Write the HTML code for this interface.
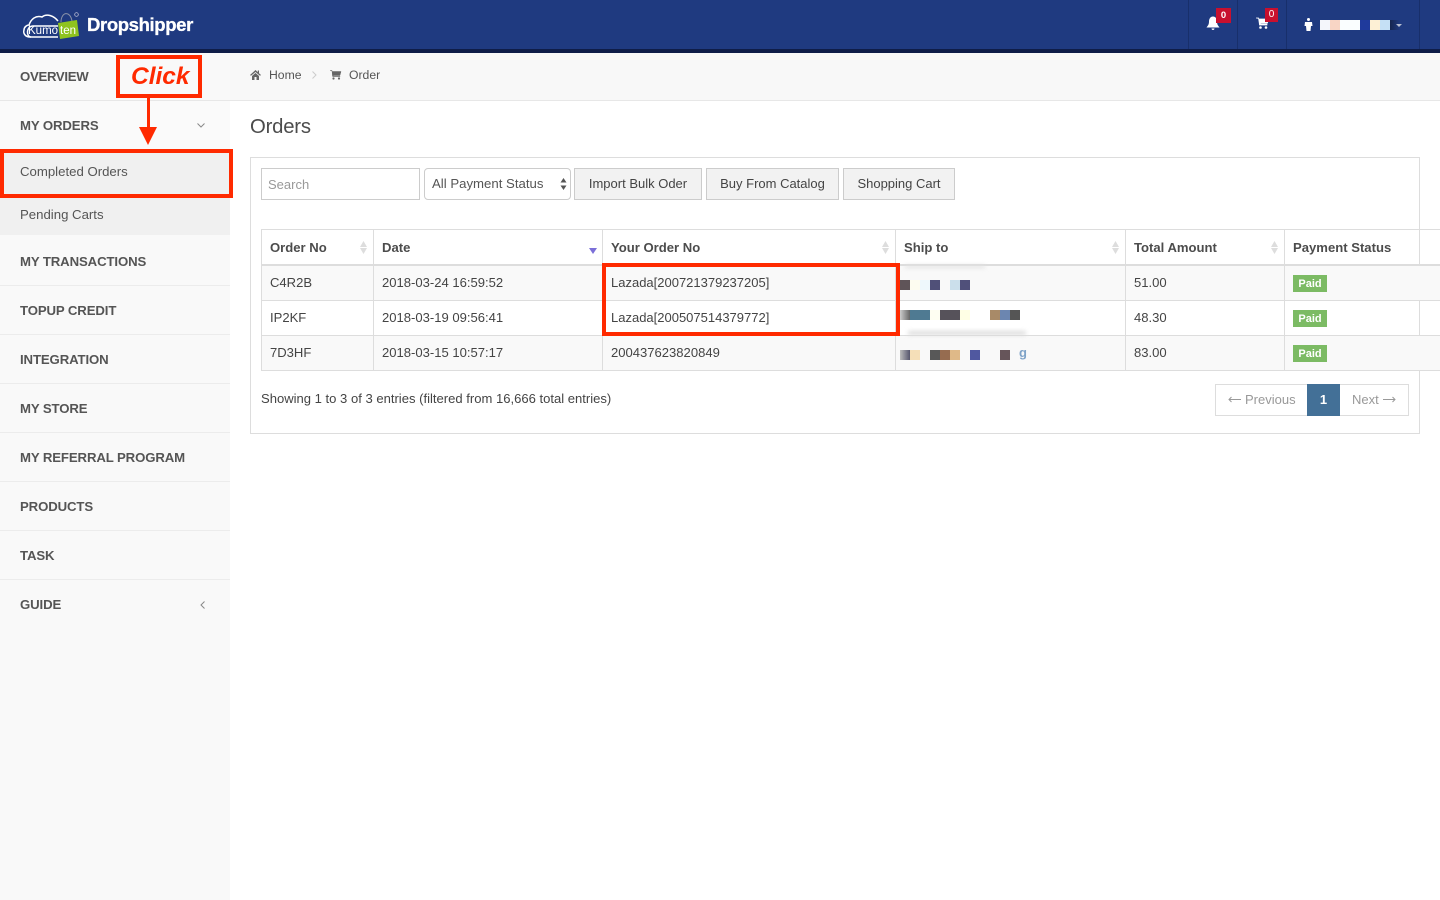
<!DOCTYPE html>
<html><head><meta charset="utf-8"><style>
html,body{margin:0;padding:0;width:1440px;height:900px;overflow:hidden;background:#fff}
body{position:relative;font-family:"Liberation Sans",sans-serif;font-size:13px;color:#444}
.a,.t{position:absolute}
.t{white-space:nowrap;line-height:20px;height:20px}
.m{margin-top:1px}
.s{font-weight:bold;font-size:13.2px;color:#555;letter-spacing:-.12px;margin-top:1px}
.h{font-weight:bold;font-size:13.1px;color:#4c4c4c;margin-top:1px}
.d{color:#444;font-size:13.05px;margin-top:1px}
.l{position:absolute;background:#ddd}
.p{position:absolute;height:10px}
.b{position:absolute;left:1293px;width:34px;height:17px;background:#7cbb64;color:#fff;font-size:11px;font-weight:bold;line-height:18px;text-align:center}
.btn{position:absolute;top:168px;height:32px;box-sizing:border-box;background:#f2f2f2;border:1px solid #ccc;line-height:29px;text-align:center;color:#444;font-size:13px}
.sv{position:absolute;overflow:visible}
</style></head><body>
<div class="a" style="left:0;top:0;width:1440px;height:49px;background:#1f3a80"></div>
<div class="a" style="left:0;top:49px;width:1440px;height:4px;background:#0f1d48"></div>
<svg class="sv" style="left:20px;top:10px" width="62" height="32" viewBox="0 0 62 32">
<path d="M38 27H10C5 27 3 23 4 20C4 17 7 15 9 15C11 9 16 5 22 7C27 3 34 6 38 11" fill="none" stroke="#fff" stroke-width="1.500"/>
<path d="M38 16H13C6 16 6 27 11 27" fill="none" stroke="#fff" stroke-width="1.500"/>
<path d="M38 13L57 10L59 26L40 29Z" fill="#8fc31f"/>
<path d="M41 12C41 2 50 0 52 11" fill="none" stroke="#8a93a8" stroke-width="1"/>
<text x="8" y="24" font-family="Liberation Sans" font-size="11.5" fill="#fff">Kumo</text>
<text x="40" y="24" font-family="Liberation Sans" font-size="11.5" fill="#fff">ten</text>
<circle cx="56.500" cy="4.500" r="1.800" fill="none" stroke="#ccd" stroke-width=".7"/>
</svg>
<div class="t" style="left:87px;top:15px;font-size:18.5px;font-weight:bold;color:#fff;letter-spacing:-.37px;-webkit-text-stroke:.3px #fff">Dropshipper</div>
<div class="a" style="left:1188px;top:0;width:1px;height:49px;background:#182f6b"></div>
<div class="a" style="left:1237px;top:0;width:1px;height:49px;background:#182f6b"></div>
<div class="a" style="left:1286px;top:0;width:1px;height:49px;background:#182f6b"></div>
<div class="a" style="left:1419px;top:0;width:1px;height:49px;background:#182f6b"></div>
<svg class="sv" style="left:1206px;top:16px" width="14" height="15" viewBox="0 0 14 14"><path d="M7 0C4 0 3 3 3 5C3 8 2 9 .5 11H13.500C12 9 11 8 11 5C11 3 10 0 7 0ZM5.500 12H8.500C8.500 14 5.500 14 5.500 12Z" fill="#fff"/></svg>
<div class="a" style="left:1216px;top:8px;width:15px;height:15px;background:#c8102e;color:#fff;font-size:9.5px;font-weight:bold;line-height:15px;text-align:center">0</div>
<svg class="sv" style="left:1256px;top:17px" width="13" height="13" viewBox="0 0 13 13"><path d="M0 1H2.500L3.500 8H11V7H4.500L4.300 6H11.500L12.500 2H3" fill="#fff" stroke="#fff" stroke-width=".7"/><circle cx="4.500" cy="10.500" r="1.300" fill="#fff"/><circle cx="10" cy="10.500" r="1.300" fill="#fff"/></svg>
<div class="a" style="left:1265px;top:8px;width:13px;height:14px;background:#c8102e;color:#fff;font-size:10px;line-height:14px;text-align:center">0</div>
<svg class="sv" style="left:1304px;top:18px" width="9" height="13" viewBox="0 0 9 13"><circle cx="4.500" cy="1.500" r="1.500" fill="#fff"/><path d="M1 4H8L8.500 8H7L6.500 13H2.500L2 8H.5Z" fill="#fff"/></svg>
<div class="a" style="left:1320px;top:20px;width:10px;height:10px;background:#f4f6fb"></div>
<div class="a" style="left:1330px;top:20px;width:10px;height:10px;background:#f8d5c5"></div>
<div class="a" style="left:1340px;top:20px;width:20px;height:10px;background:#fafeff"></div>
<div class="a" style="left:1360px;top:20px;width:10px;height:10px;background:#1f3a9c"></div>
<div class="a" style="left:1370px;top:20px;width:10px;height:10px;background:#fdf0d5"></div>
<div class="a" style="left:1380px;top:20px;width:10px;height:10px;background:#c5e0f5"></div>
<div class="a" style="left:1390px;top:20px;width:10px;height:10px;background:linear-gradient(90deg,#16264f,#1f3a80)"></div>
<div class="a" style="left:1396px;top:24px;width:0;height:0;border:3px solid transparent;border-top:3px solid #b8bfd0"></div>

<div class="a" style="left:0;top:53px;width:230px;height:847px;background:#f9f9f9"></div>
<div class="a" style="left:230px;top:53px;width:1210px;height:47px;background:#f8f8f8"></div>
<div class="l" style="left:0;top:100px;width:1440px;height:1px;background:#e7e7e7"></div>
<div class="a" style="left:0;top:101px;width:230px;height:134px;background:#fafafa"></div>
<div class="a" style="left:0;top:149px;width:230px;height:86px;background:#f0f0f0"></div>

<div class="t s" style="left:20px;top:66px;letter-spacing:-.3px">OVERVIEW</div>
<div class="t s" style="left:20px;top:115px">MY ORDERS</div>
<svg class="sv" style="left:197px;top:123px" width="8" height="5" viewBox="0 0 8 5"><path d="M.5 .5L4 4L7.500 .5" fill="none" stroke="#888" stroke-width="1"/></svg>
<div class="t m" style="left:20px;top:161px;font-size:13.2px;color:#555">Completed Orders</div>
<div class="t m" style="left:20px;top:204px;font-size:13.2px;color:#555">Pending Carts</div>
<div class="t s" style="left:20px;top:251px">MY TRANSACTIONS</div>
<div class="t s" style="left:20px;top:300px">TOPUP CREDIT</div>
<div class="t s" style="left:20px;top:349px">INTEGRATION</div>
<div class="t s" style="left:20px;top:398px">MY STORE</div>
<div class="t s" style="left:20px;top:447px">MY REFERRAL PROGRAM</div>
<div class="t s" style="left:20px;top:496px">PRODUCTS</div>
<div class="t s" style="left:20px;top:545px">TASK</div>
<div class="t s" style="left:20px;top:594px">GUIDE</div>
<svg class="sv" style="left:200px;top:601px" width="5" height="8" viewBox="0 0 5 8"><path d="M4.500 .5L1 4L4.500 7.500" fill="none" stroke="#888" stroke-width="1"/></svg>
<div class="l" style="left:0;top:285px;width:230px;height:1px;background:#ececec"></div>
<div class="l" style="left:0;top:334px;width:230px;height:1px;background:#ececec"></div>
<div class="l" style="left:0;top:383px;width:230px;height:1px;background:#ececec"></div>
<div class="l" style="left:0;top:432px;width:230px;height:1px;background:#ececec"></div>
<div class="l" style="left:0;top:481px;width:230px;height:1px;background:#ececec"></div>
<div class="l" style="left:0;top:530px;width:230px;height:1px;background:#ececec"></div>
<div class="l" style="left:0;top:579px;width:230px;height:1px;background:#ececec"></div>

<svg class="sv" style="left:250px;top:70px" width="11" height="10" viewBox="0 0 11 10"><path d="M5.500 0L0 5L1 5.800L5.500 2L10 5.800L11 5L9 3.200V.5H7.800V2.100ZM2 6V10H4.500V7H6.500V10H9V6L5.500 3Z" fill="#666"/></svg>
<div class="t" style="left:269px;top:65px;font-size:12.2px;color:#555">Home</div>
<svg class="sv" style="left:312px;top:71px" width="5" height="8" viewBox="0 0 5 8"><path d="M.5 .5L4 4L.5 7.500" fill="none" stroke="#ccc" stroke-width="1"/></svg>
<svg class="sv" style="left:330px;top:70px" width="11" height="10" viewBox="0 0 11 10"><path d="M0 .5H2L2.600 6.500H10V5.700H3.400L3.300 5H10L11 1.500H2.500" fill="#666" stroke="#666" stroke-width=".5"/><circle cx="3.500" cy="8.500" r="1.100" fill="#666"/><circle cx="9" cy="8.500" r="1.100" fill="#666"/></svg>
<div class="t" style="left:349px;top:65px;font-size:12.2px;color:#555">Order</div>

<div class="t" style="left:250px;top:117px;font-size:20.3px;color:#4c4c4c;letter-spacing:-.2px">Orders</div>

<div class="a" style="left:250px;top:157px;width:1170px;height:277px;box-sizing:border-box;border:1px solid #ddd"></div>

<div class="a" style="left:261px;top:168px;width:159px;height:32px;box-sizing:border-box;border:1px solid #ccc"></div>
<div class="t m" style="left:268px;top:174px;color:#999">Search</div>
<div class="a" style="left:424px;top:168px;width:147px;height:32px;box-sizing:border-box;border:1px solid #ccc;border-radius:4px"></div>
<div class="t m" style="left:432px;top:173px;color:#555;font-size:13.2px">All Payment Status</div>
<svg class="sv" style="left:560px;top:178px" width="7" height="12" viewBox="0 0 7 12"><path d="M3.500 0L6.500 4.500H.5ZM3.500 12L.5 7.500H6.500Z" fill="#555"/></svg>
<div class="btn" style="left:574px;width:128px;top:168px">Import Bulk Oder</div>
<div class="btn" style="left:706px;width:133px">Buy From Catalog</div>
<div class="btn" style="left:843px;width:112px">Shopping Cart</div>

<div class="a" style="left:261px;top:265px;width:1179px;height:35px;background:#f9f9f9"></div>
<div class="a" style="left:261px;top:335px;width:1179px;height:35px;background:#f9f9f9"></div>
<div class="l" style="left:261px;top:229px;width:1179px;height:1px"></div>
<div class="l" style="left:261px;top:264px;width:1179px;height:2px"></div>
<div class="l" style="left:261px;top:300px;width:1179px;height:1px"></div>
<div class="l" style="left:261px;top:335px;width:1179px;height:1px"></div>
<div class="l" style="left:261px;top:370px;width:1179px;height:1px"></div>
<div class="l" style="left:261px;top:229px;width:1px;height:142px"></div>
<div class="l" style="left:373px;top:229px;width:1px;height:142px"></div>
<div class="l" style="left:602px;top:229px;width:1px;height:142px"></div>
<div class="l" style="left:895px;top:229px;width:1px;height:142px"></div>
<div class="l" style="left:1125px;top:229px;width:1px;height:142px"></div>
<div class="l" style="left:1284px;top:229px;width:1px;height:142px"></div>

<div class="t h" style="left:270px;top:237px">Order No</div>
<div class="t h" style="left:382px;top:237px">Date</div>
<div class="t h" style="left:611px;top:237px">Your Order No</div>
<div class="t h" style="left:904px;top:237px">Ship to</div>
<div class="t h" style="left:1134px;top:237px">Total Amount</div>
<div class="t h" style="left:1293px;top:237px">Payment Status</div>
<svg class="sv" style="left:360px;top:241px" width="7" height="13" viewBox="0 0 7 13"><path d="M3.500 0L7 6H0ZM3.500 13L0 7H7Z" fill="#ddd"/></svg>
<svg class="sv" style="left:882px;top:241px" width="7" height="13" viewBox="0 0 7 13"><path d="M3.500 0L7 6H0ZM3.500 13L0 7H7Z" fill="#ddd"/></svg>
<svg class="sv" style="left:1112px;top:241px" width="7" height="13" viewBox="0 0 7 13"><path d="M3.500 0L7 6H0ZM3.500 13L0 7H7Z" fill="#ddd"/></svg>
<svg class="sv" style="left:1271px;top:241px" width="7" height="13" viewBox="0 0 7 13"><path d="M3.500 0L7 6H0ZM3.500 13L0 7H7Z" fill="#ddd"/></svg>
<svg class="sv" style="left:589px;top:248px" width="8" height="6" viewBox="0 0 8 6"><path d="M0 0H8L4 6Z" fill="#7b6fd8"/></svg>

<div class="t d" style="left:270px;top:272px">C4R2B</div>
<div class="t d" style="left:382px;top:272px">2018-03-24 16:59:52</div>
<div class="t d" style="left:611px;top:272px;font-size:13px">Lazada[200721379237205]</div>
<div class="t d" style="left:1134px;top:272px">51.00</div>
<div class="b" style="top:275px">Paid</div>
<div class="t d" style="left:270px;top:307px">IP2KF</div>
<div class="t d" style="left:382px;top:307px">2018-03-19 09:56:41</div>
<div class="t d" style="left:611px;top:307px;font-size:13px">Lazada[200507514379772]</div>
<div class="t d" style="left:1134px;top:307px">48.30</div>
<div class="b" style="top:310px">Paid</div>
<div class="t d" style="left:270px;top:342px">7D3HF</div>
<div class="t d" style="left:382px;top:342px">2018-03-15 10:57:17</div>
<div class="t d" style="left:611px;top:342px">200437623820849</div>
<div class="t d" style="left:1134px;top:342px">83.00</div>
<div class="b" style="top:345px">Paid</div>

<div class="a" style="left:905px;top:265px;width:80px;height:3px;background:#e2e2e2;filter:blur(2px)"></div>
<div class="p" style="left:900px;top:280px;width:10px;background:#5f5458"></div>
<div class="p" style="left:910px;top:280px;width:10px;background:#fdfcf0"></div>
<div class="p" style="left:920px;top:280px;width:10px;background:#eef8fc"></div>
<div class="p" style="left:930px;top:280px;width:10px;background:#505078"></div>
<div class="p" style="left:950px;top:280px;width:10px;background:#cbdfeb"></div>
<div class="p" style="left:960px;top:280px;width:10px;background:#50507a"></div>
<div class="p" style="left:900px;top:310px;width:10px;background:linear-gradient(90deg,#ccc,#666)"></div>
<div class="p" style="left:910px;top:310px;width:20px;background:#4f7a92"></div>
<div class="p" style="left:930px;top:310px;width:10px;background:#fefef2"></div>
<div class="p" style="left:940px;top:310px;width:20px;background:#56525a"></div>
<div class="p" style="left:960px;top:310px;width:10px;background:#ffffe5"></div>
<div class="p" style="left:990px;top:310px;width:10px;background:#a88a68"></div>
<div class="p" style="left:1000px;top:310px;width:10px;background:#6c86b0"></div>
<div class="p" style="left:1010px;top:310px;width:10px;background:#555"></div>
<div class="a" style="left:908px;top:331px;width:118px;height:4px;background:#dcdcdc;filter:blur(2px)"></div>
<div class="p" style="left:900px;top:350px;width:10px;background:linear-gradient(90deg,#bbb,#55556c)"></div>
<div class="p" style="left:910px;top:350px;width:10px;background:#f5dfb8"></div>
<div class="p" style="left:930px;top:350px;width:10px;background:#585858"></div>
<div class="p" style="left:940px;top:350px;width:10px;background:#966c50"></div>
<div class="p" style="left:950px;top:350px;width:10px;background:#dfb988"></div>
<div class="p" style="left:970px;top:350px;width:10px;background:#5058a0"></div>
<div class="p" style="left:1000px;top:350px;width:10px;background:#66555a"></div>
<div class="t" style="left:1019px;top:343px;font-size:13px;font-weight:bold;color:#7fa3c8">g</div>

<div class="t m" style="left:261px;top:388px;color:#444;font-size:13.05px">Showing 1 to 3 of 3 entries (filtered from 16,666 total entries)</div>

<div class="a" style="left:1215px;top:384px;width:194px;height:32px;box-sizing:border-box;border:1px solid #ddd"></div>
<svg class="sv" style="left:1228px;top:396px" width="13" height="7" viewBox="0 0 13 7"><path d="M13 3.500H1M3.500 1L1 3.500L3.500 6" fill="none" stroke="#999" stroke-width="1"/></svg>
<div class="t m" style="left:1245px;top:389px;color:#999;font-size:13px">Previous</div>
<div class="a" style="left:1307px;top:384px;width:33px;height:32px;background:#437097;color:#fff;font-weight:bold;font-size:13px;line-height:31px;text-align:center">1</div>
<div class="t m" style="left:1352px;top:389px;color:#999;font-size:13px">Next</div>
<svg class="sv" style="left:1383px;top:396px" width="13" height="7" viewBox="0 0 13 7"><path d="M0 3.500H12M9.500 1L12 3.500L9.500 6" fill="none" stroke="#999" stroke-width="1"/></svg>

<div class="a" style="left:116px;top:55px;width:86px;height:43px;box-sizing:border-box;border:4px solid #ff2a00"></div>
<div class="t" style="left:131px;top:62px;height:30px;line-height:30px;font-size:24.5px;font-style:italic;font-weight:bold;color:#ff2a00">Click</div>
<div class="a" style="left:146.500px;top:98px;width:3px;height:30px;background:#ff2a00"></div>
<svg class="sv" style="left:139px;top:127px" width="18" height="18" viewBox="0 0 18 18"><path d="M0 0H18L9 18Z" fill="#ff2a00"/></svg>
<div class="a" style="left:0;top:149px;width:233px;height:49px;box-sizing:border-box;border:4px solid #ff2a00"></div>
<div class="a" style="left:602px;top:263px;width:298px;height:73px;box-sizing:border-box;border:4px solid #ff2a00"></div>
</body></html>
